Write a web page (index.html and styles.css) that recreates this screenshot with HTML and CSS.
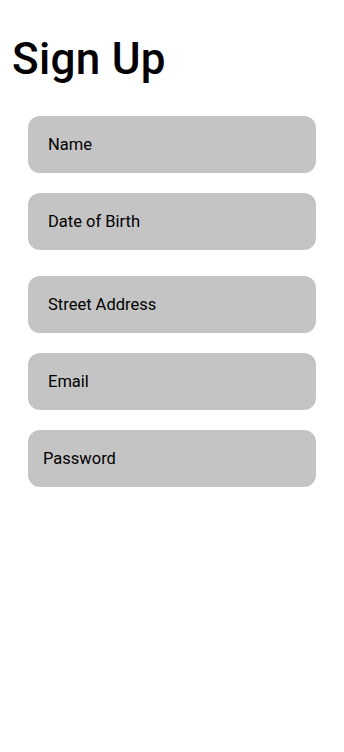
FILE: index.html
```html
<!DOCTYPE html>
<html lang="en">
<head>
<meta charset="utf-8">
<title>Sign Up</title>
<link rel="stylesheet" href="styles.css">
</head>
<body>
<main class="page">
  <h1 class="title">Sign Up</h1>
  <form class="form">
    <div class="field">Name</div>
    <div class="field">Date of Birth</div>
    <div class="field field--spaced">Street Address</div>
    <div class="field">Email</div>
    <div class="field field--tight">Password</div>
  </form>
</main>
</body>
</html>
```
FILE: styles.css
```css
* { box-sizing: border-box; }
html, body {
  margin: 0;
  padding: 0;
  background: #ffffff;
}
body {
  font-family: Roboto, "Liberation Sans", sans-serif;
  color: #000000;
}
.page {
  display: flex;
  flex-direction: column;
  padding-top: 33px;
}
.title {
  margin: 0 0 0 12px;
  font-size: 44px;
  line-height: 52px;
  font-weight: 500;
  letter-spacing: 0.3px;
}
.form {
  display: flex;
  flex-direction: column;
  gap: 20.5px;
  margin: 31px 0 0 28px;
  width: 288px;
}
.field {
  height: 56.5px;
  border-radius: 12px;
  background: #c4c4c4;
  display: flex;
  align-items: center;
  padding: 1px 0 0 20px;
  font-size: 16.5px;
}
.field--spaced { margin-top: 6px; }
.field--tight { padding-left: 15px; }
```
